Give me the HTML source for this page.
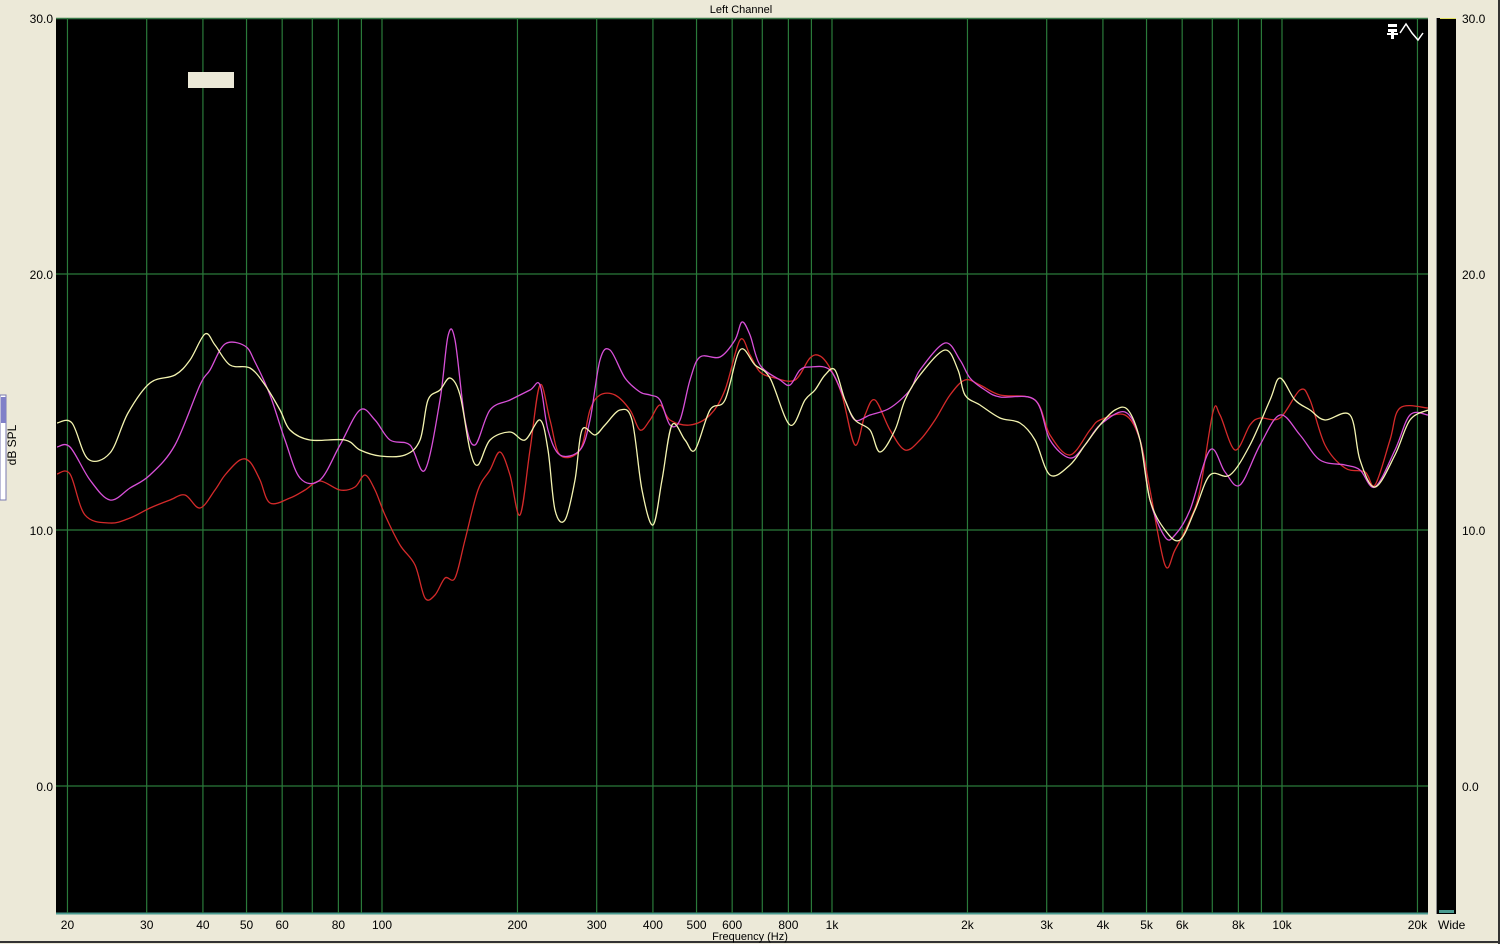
<!DOCTYPE html><html><head><meta charset="utf-8"><style>
html,body{margin:0;padding:0;width:1500px;height:944px;overflow:hidden;background:#ece9d8;font-family:"Liberation Sans",sans-serif}
svg{position:absolute;left:0;top:0}
</style></head><body>
<svg width="1500" height="944" xmlns="http://www.w3.org/2000/svg" font-family="Liberation Sans, sans-serif" font-size="11">
<rect x="0" y="0" width="1500" height="944" fill="#ece9d8"/>
<line x1="0" y1="942" x2="1500" y2="942" stroke="#333" stroke-width="2"/>
<line x1="1499" y1="0" x2="1499" y2="944" stroke="#333" stroke-width="2"/>
<rect x="56" y="18" width="1372" height="896" fill="#000"/>
<line x1="56" y1="913.5" x2="1428" y2="913.5" stroke="#4a9a90" stroke-width="2"/>
<line x1="56" y1="18.5" x2="1428" y2="18.5" stroke="#3a7a4a" stroke-width="1.5"/>
<g id="grid" stroke="#2a7a3a" stroke-width="1.2"></g>
<rect x="1436" y="18" width="20" height="896" fill="#000"/>
<rect x="1436" y="18" width="1" height="896" fill="#888"/>
<rect x="1439" y="910" width="15" height="3" fill="#4a9a90"/>
<line x1="1440" y1="18.5" x2="1456" y2="18.5" stroke="#e0e060"/>
<rect x="188" y="72" width="46" height="16" fill="#ece9d8"/>
<rect x="0" y="395" width="6" height="105" fill="#fff" stroke="#7a7ab0"/>
<rect x="1" y="397" width="5" height="26" fill="#8080c8"/>
<g id="curves" fill="none" stroke-width="1.3" stroke-linejoin="round"></g>
<text x="741" y="13" text-anchor="middle" font-size="11">Left Channel</text>
<g font-size="12" text-anchor="end">
<text x="53" y="23">30.0</text><text x="53" y="279">20.0</text><text x="53" y="535">10.0</text><text x="53" y="791">0.0</text>
</g>
<g font-size="12">
<text x="1462" y="23">30.0</text><text x="1462" y="279">20.0</text><text x="1462" y="535">10.0</text><text x="1462" y="791">0.0</text>
<text x="1438" y="929">Wide</text>
</g>
<text transform="translate(16,445) rotate(-90)" text-anchor="middle" font-size="12">dB SPL</text>
<text x="750" y="940" text-anchor="middle" font-size="11">Frequency (Hz)</text>
<g id="xl" font-size="12" text-anchor="middle"></g>
<g fill="#fff" stroke="#fff">
<rect x="1388" y="24" width="9" height="3" stroke="none"/>
<rect x="1388" y="29" width="9" height="3" stroke="none"/>
<rect x="1391" y="32" width="3" height="7" stroke="none"/>
<rect x="1387" y="33" width="11" height="2" stroke="none"/>
<path d="M1400 33 L1406 24 L1412 33 L1418 40 L1423 33" fill="none" stroke-width="1.5"/>
</g>
</svg>
<script>
const NS="http://www.w3.org/2000/svg";
const X=f=>382+450*(Math.log10(f)-2);
const g=document.getElementById('grid');
[0,274,530,786].forEach(y=>{if(y){let l=document.createElementNS(NS,'line');l.setAttribute('x1',56);l.setAttribute('x2',1428);l.setAttribute('y1',y);l.setAttribute('y2',y);g.appendChild(l);}});
const fs=[20,30,40,50,60,70,80,90,100,200,300,400,500,600,700,800,900,1000,2000,3000,4000,5000,6000,7000,8000,9000,10000,20000];
fs.forEach(f=>{let l=document.createElementNS(NS,'line');let x=X(f);l.setAttribute('x1',x);l.setAttribute('x2',x);l.setAttribute('y1',18);l.setAttribute('y2',913);g.appendChild(l);});
const lab={20:'20',30:'30',40:'40',50:'50',60:'60',80:'80',100:'100',200:'200',300:'300',400:'400',500:'500',600:'600',800:'800',1000:'1k',2000:'2k',3000:'3k',4000:'4k',5000:'5k',6000:'6k',8000:'8k',10000:'10k',20000:'20k'};
const xl=document.getElementById('xl');
for(const f in lab){let t=document.createElementNS(NS,'text');t.setAttribute('x',X(+f));t.setAttribute('y',929);t.textContent=lab[f];xl.appendChild(t);}
function path(p){let d='M'+p[0][0]+' '+p[0][1];for(let i=0;i<p.length-1;i++){const p0=p[i-1]||p[i],p1=p[i],p2=p[i+1],p3=p[i+2]||p2;const c1=[p1[0]+(p2[0]-p0[0])/6,p1[1]+(p2[1]-p0[1])/6],c2=[p2[0]-(p3[0]-p1[0])/6,p2[1]-(p3[1]-p1[1])/6];d+=` C${c1[0]} ${c1[1]} ${c2[0]} ${c2[1]} ${p2[0]} ${p2[1]}`;}return d;}
const Y=[[57,423],[72,423],[88,459],[110,453],[128,413],[150,383],[175,375],[190,360],[205,334],[215,345],[230,365],[250,368],[265,385],[280,410],[290,430],[310,440],[345,440],[360,450],[380,456],[405,455],[420,440],[428,400],[440,390],[450,378],[460,395],[470,450],[478,465],[490,440],[510,432],[525,440],[540,420],[548,450],[555,510],[565,520],[575,480],[582,430],[595,435],[605,425],[620,410],[632,420],[642,490],[653,525],[662,480],[672,425],[685,440],[695,450],[710,410],[725,400],[740,350],[755,365],[770,378],[790,425],[805,400],[815,390],[825,375],[835,370],[845,400],[855,420],[870,430],[880,452],[895,430],[905,400],[920,375],[945,350],[958,370],[965,395],[980,405],[1000,418],[1020,423],[1035,440],[1050,475],[1070,465],[1085,445],[1100,425],[1115,410],[1128,410],[1140,440],[1150,500],[1165,530],[1180,540],[1195,510],[1210,475],[1230,475],[1250,445],[1270,400],[1280,378],[1295,400],[1310,410],[1325,420],[1350,415],[1360,460],[1375,487],[1395,455],[1410,420],[1428,410]];
const M=[[57,447],[70,447],[90,480],[110,500],[130,488],[150,475],[175,445],[200,385],[210,370],[225,344],[245,346],[255,362],[270,395],[285,440],[300,478],[320,480],[340,445],[360,410],[375,420],[390,440],[410,445],[425,470],[440,400],[448,336],[455,340],[465,420],[475,445],[490,410],[510,400],[530,390],[540,385],[548,430],[560,455],[580,450],[590,420],[600,360],[610,350],[625,378],[640,392],[650,395],[660,400],[670,425],[680,420],[690,380],[700,357],[720,357],[735,340],[742,322],[750,335],[760,365],[780,380],[790,385],[800,370],[810,367],[830,370],[845,400],[855,420],[870,415],[890,408],[910,390],[920,370],[945,343],[960,360],[970,378],[985,390],[1000,397],[1035,400],[1050,440],[1070,458],[1085,445],[1100,425],[1125,412],[1140,440],[1150,500],[1165,537],[1175,535],[1190,510],[1210,450],[1225,472],[1240,485],[1260,445],[1280,415],[1300,435],[1320,460],[1345,465],[1360,470],[1375,487],[1395,450],[1410,415],[1428,415]];
const R=[[57,474],[70,474],[85,515],[110,523],[130,518],[150,508],[170,500],[185,495],[200,508],[215,490],[225,475],[240,460],[250,462],[260,480],[270,503],[290,498],[305,490],[320,481],[340,490],[355,487],[365,475],[375,490],[385,515],[400,545],[415,565],[425,598],[435,595],[445,578],[455,578],[465,540],[478,490],[490,470],[500,452],[510,475],[520,515],[530,450],[540,385],[550,420],[560,455],[580,450],[590,410],[600,395],[615,395],[630,410],[640,430],[650,420],[660,405],[670,420],[690,425],[710,415],[725,390],[740,340],[750,355],[760,372],[775,378],[795,380],[810,358],[820,356],[830,368],[842,395],[855,445],[865,415],[875,400],[890,430],[905,450],[920,440],[935,420],[950,395],[965,380],[980,385],[1000,395],[1035,400],[1050,435],[1070,455],[1090,430],[1100,420],[1125,415],[1140,440],[1150,490],[1165,565],[1175,550],[1190,520],[1200,490],[1213,412],[1220,415],[1235,450],[1250,425],[1260,418],[1280,418],[1300,390],[1310,400],[1325,445],[1345,468],[1365,472],[1375,485],[1390,440],[1400,408],[1428,408]];
const c=document.getElementById('curves');
[[R,'#d42a2a'],[M,'#d850d8'],[Y,'#f4f4b0']].forEach(([p,col])=>{let e=document.createElementNS(NS,'path');e.setAttribute('d',path(p));e.setAttribute('stroke',col);c.appendChild(e);});
</script>
</body></html>
